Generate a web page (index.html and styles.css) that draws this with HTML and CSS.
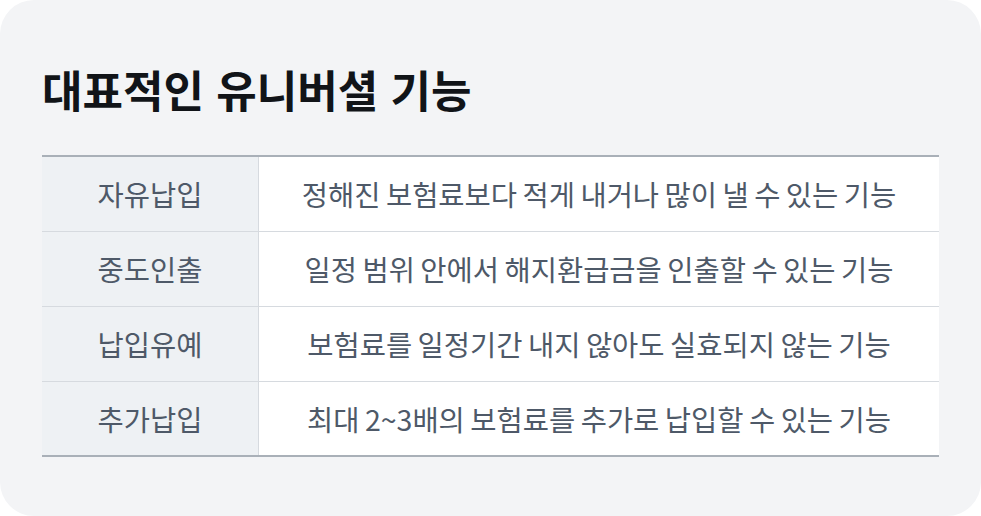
FILE: index.html
```html
<!DOCTYPE html>
<html lang="ko">
<head>
<meta charset="utf-8">
<link rel="stylesheet" href="styles.css">
</head>
<body>
<section class="card">
  <h2 class="title">대표적인 유니버셜 기능</h2>
  <table class="features">
    <tbody>
      <tr><th>자유납입</th><td>정해진 보험료보다 적게 내거나 많이 낼 수 있는 기능</td></tr>
      <tr><th>중도인출</th><td>일정 범위 안에서 해지환급금을 인출할 수 있는 기능</td></tr>
      <tr><th>납입유예</th><td>보험료를 일정기간 내지 않아도 실효되지 않는 기능</td></tr>
      <tr class="last"><th>추가납입</th><td>최대 2~3배의 보험료를 추가로 납입할 수 있는 기능</td></tr>
    </tbody>
  </table>
</section>
</body>
</html>
```
FILE: styles.css
```css
html, body {
  margin: 0;
  padding: 0;
  background: #ffffff;
}
body {
  font-family: "Noto Sans CJK KR", "Noto Sans", sans-serif;
}
.card {
  box-sizing: border-box;
  width: 981px;
  height: 516px;
  background: #f3f4f6;
  border-radius: 34px;
  padding: 59px 42px 0 42px;
}
.title {
  margin: 0 0 36px 0;
  font-size: 44px;
  line-height: 60px;
  font-weight: 700;
  color: #111418;
  letter-spacing: 0;
}
.features {
  width: 897px;
  border-collapse: separate;
  border-spacing: 0;
  border-top: 2px solid #a9b0b8;
  border-bottom: 2px solid #a9b0b8;
}
.features th, .features td {
  box-sizing: content-box;
  height: 74px;
  padding: 0;
  text-align: center;
  vertical-align: middle;
  font-size: 28.5px;
  line-height: 40px;
  font-weight: 400;
  color: #4e5968;
  border-bottom: 1px solid #d6dadf;
}
.features td {
  word-spacing: -2.5px;
  background: #ffffff;
}
.features tr.last th, .features tr.last td {
  border-bottom: none;
  height: 73px;
}
.features th {
  width: 216px;
  background: #eef1f4;
  border-right: 1px solid #d6dadf;
}
```
